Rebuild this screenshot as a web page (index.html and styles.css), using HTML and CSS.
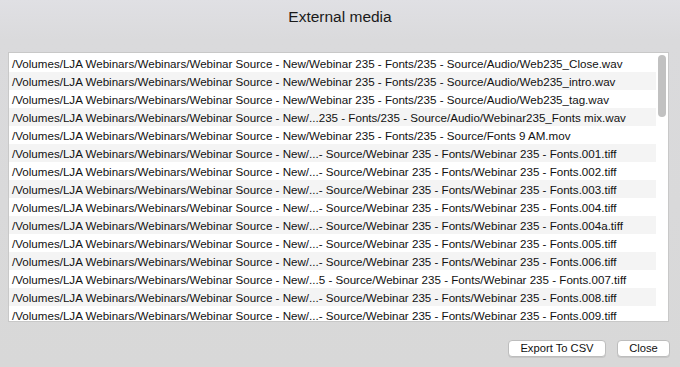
FILE: index.html
```html
<!DOCTYPE html>
<html>
<head>
<meta charset="utf-8">
<link rel="stylesheet" href="styles.css">
</head>
<body>
<div class="window">
  <div class="title">External media</div>
  <div class="listbox">
    <div class="rows">
      <div class="row">/Volumes/LJA Webinars/Webinars/Webinar Source - New/Webinar 235 - Fonts/235 - Source/Audio/Web235_Close.wav</div>
      <div class="row">/Volumes/LJA Webinars/Webinars/Webinar Source - New/Webinar 235 - Fonts/235 - Source/Audio/Web235_intro.wav</div>
      <div class="row">/Volumes/LJA Webinars/Webinars/Webinar Source - New/Webinar 235 - Fonts/235 - Source/Audio/Web235_tag.wav</div>
      <div class="row">/Volumes/LJA Webinars/Webinars/Webinar Source - New/...235 - Fonts/235 - Source/Audio/Webinar235_Fonts mix.wav</div>
      <div class="row">/Volumes/LJA Webinars/Webinars/Webinar Source - New/Webinar 235 - Fonts/235 - Source/Fonts 9 AM.mov</div>
      <div class="row">/Volumes/LJA Webinars/Webinars/Webinar Source - New/...- Source/Webinar 235 - Fonts/Webinar 235 - Fonts.001.tiff</div>
      <div class="row">/Volumes/LJA Webinars/Webinars/Webinar Source - New/...- Source/Webinar 235 - Fonts/Webinar 235 - Fonts.002.tiff</div>
      <div class="row">/Volumes/LJA Webinars/Webinars/Webinar Source - New/...- Source/Webinar 235 - Fonts/Webinar 235 - Fonts.003.tiff</div>
      <div class="row">/Volumes/LJA Webinars/Webinars/Webinar Source - New/...- Source/Webinar 235 - Fonts/Webinar 235 - Fonts.004.tiff</div>
      <div class="row">/Volumes/LJA Webinars/Webinars/Webinar Source - New/...- Source/Webinar 235 - Fonts/Webinar 235 - Fonts.004a.tiff</div>
      <div class="row">/Volumes/LJA Webinars/Webinars/Webinar Source - New/...- Source/Webinar 235 - Fonts/Webinar 235 - Fonts.005.tiff</div>
      <div class="row">/Volumes/LJA Webinars/Webinars/Webinar Source - New/...- Source/Webinar 235 - Fonts/Webinar 235 - Fonts.006.tiff</div>
      <div class="row">/Volumes/LJA Webinars/Webinars/Webinar Source - New/...5 - Source/Webinar 235 - Fonts/Webinar 235 - Fonts.007.tiff</div>
      <div class="row">/Volumes/LJA Webinars/Webinars/Webinar Source - New/...- Source/Webinar 235 - Fonts/Webinar 235 - Fonts.008.tiff</div>
      <div class="row">/Volumes/LJA Webinars/Webinars/Webinar Source - New/...- Source/Webinar 235 - Fonts/Webinar 235 - Fonts.009.tiff</div>
    </div>
    <div class="track"><div class="thumb"></div></div>
  </div>
  <div class="buttons">
    <button class="btn btn-export">Export To CSV</button>
    <button class="btn btn-close">Close</button>
  </div>
</div>
</body>
</html>
```

FILE: styles.css
```css
html, body {
  margin: 0;
  padding: 0;
}
body {
  width: 680px;
  height: 367px;
  overflow: hidden;
  background: linear-gradient(to bottom, #e0e0e4 0px, #dadadc 40px, #d8d8d8 100%);
  font-family: "Liberation Sans", Arial, sans-serif;
  color: #111;
}
.window {
  display: flex;
  flex-direction: column;
  height: 367px;
}
.title {
  height: 34px;
  line-height: 34px;
  text-align: center;
  font-size: 15.5px;
  color: #1a1a1a;
  padding-top: 0;
}
.listbox {
  margin: 18px 11px 0 8px;
  height: 268px;
  border: 1px solid #c8c8c8;
  background: #fff;
  display: flex;
  overflow: hidden;
}
.rows {
  flex: 1;
  padding-top: 1px;
  overflow: hidden;
}
.row {
  height: 18px;
  line-height: 19px;
  font-size: 11.6px;
  padding-left: 3px;
  white-space: nowrap;
  overflow: hidden;
  color: #111;
}
.row:nth-child(even) {
  background: #f4f4f4;
}
.track {
  width: 12px;
  padding: 2px 2px 0 0;
  box-sizing: border-box;
  display: flex;
  justify-content: flex-end;
}
.thumb {
  width: 8px;
  height: 62px;
  border-radius: 4px;
  background: #c1c1c1;
}
.buttons {
  display: flex;
  justify-content: flex-end;
  gap: 11px;
  margin: 18px 10px 0 0;
}
.btn {
  height: 17px;
  padding: 0;
  font-family: "Liberation Sans", Arial, sans-serif;
  font-size: 11.2px;
  line-height: 15px;
  color: #111;
  background: #fff;
  border: 1px solid #bdbdbd;
  border-radius: 4px;
  box-shadow: 0 1px 0 rgba(0,0,0,0.08);
}
.btn-export {
  width: 98px;
}
.btn-close {
  width: 53px;
}
```
